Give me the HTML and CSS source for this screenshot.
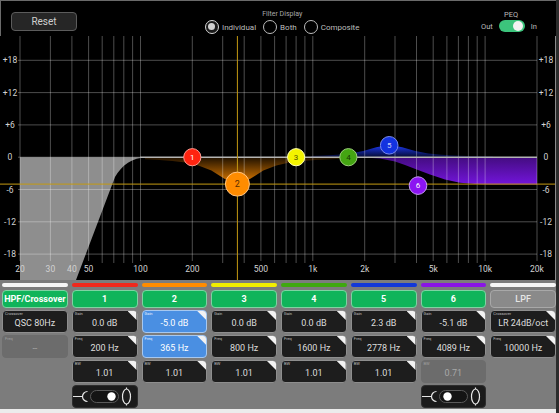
FILE: index.html
```html
<!DOCTYPE html>
<html>
<head>
<meta charset="utf-8">
<link rel="stylesheet" href="styles.css">
</head>
<body>
<div class="app">
  <header class="topbar">
    <div class="reset">Reset</div>
    <div class="filter-display">
      <div class="fd-label">Filter Display</div>
      <div class="radios">
        <span class="radio on"><span class="dot"></span>Individual</span>
        <span class="radio"><span class="dot"></span>Both</span>
        <span class="radio"><span class="dot"></span>Composite</span>
      </div>
    </div>
    <div class="peq">
      <div class="peq-label">PEQ</div>
      <div class="peq-row"><span>Out</span><span class="switch"><span class="knob"></span></span><span>In</span></div>
    </div>
  </header>

  <svg class="plot" width="556" height="244" viewBox="0 36 556 244" xmlns="http://www.w3.org/2000/svg">
    <defs>
      <linearGradient id="gOr" gradientUnits="userSpaceOnUse" x1="0" y1="157" x2="0" y2="184">
        <stop offset="0" stop-color="#ff8c00" stop-opacity="0.12"/>
        <stop offset="1" stop-color="#ff8c00" stop-opacity="0.9"/>
      </linearGradient>
      <linearGradient id="gBl" gradientUnits="userSpaceOnUse" x1="0" y1="157" x2="0" y2="145">
        <stop offset="0" stop-color="#1e3cff" stop-opacity="0.2"/>
        <stop offset="1" stop-color="#1e3cff" stop-opacity="0.95"/>
      </linearGradient>
      <linearGradient id="gPu" gradientUnits="userSpaceOnUse" x1="0" y1="157" x2="0" y2="185">
        <stop offset="0" stop-color="#7a16e8" stop-opacity="0.55"/>
        <stop offset="1" stop-color="#7a16e8" stop-opacity="0.95"/>
      </linearGradient>
    </defs>
    <rect x="0" y="36" width="556" height="244" fill="#000"/>
    <path d="M20,157.2 L147,157.2 C132,157.4 122,165 115,177 L76,280 L20,280 Z" fill="#8e8e8e"/>

    <path d="M145,157.2 L145,159.2 L159.5,159.9 L172.5,160.9 L185.5,162.6 L198.4,165.5 L211.4,170.6 L224.4,178.7 L237.4,184.1 L250.3,178.7 L263.3,170.6 L276.3,165.5 L289.2,162.6 L302.2,160.9 L315.2,159.9 L341.1,158.8 L341.1,157.2 Z" fill="url(#gOr)"/>
    <path d="M311.4,157.2 L311.4,156.0 L324.4,155.5 L337.4,154.7 L350.3,153.4 L363.3,151.0 L376.3,147.3 L389.2,144.8 L402.2,147.3 L415.2,151.0 L428.2,153.4 L441.1,154.7 L454.1,155.5 L467.1,156.0 L493,156.5 L493,157.2 Z" fill="url(#gBl)"/>
    <path d="M360,157.2 L380,158.5 L395,161.5 L405,165 L418,170 L430,174.5 L445,179.5 L460,182.8 L475,184 L490,184.4 L537,184.6 L537,157.2 Z" fill="url(#gPu)"/>

    <g stroke="#ffffff" stroke-opacity="0.3" stroke-width="1">
      <line x1="20" y1="36" x2="20" y2="261"/>
      <line x1="50.4" y1="36" x2="50.4" y2="261"/>
      <line x1="71.9" y1="36" x2="71.9" y2="261"/>
      <line x1="88.6" y1="36" x2="88.6" y2="261"/>
      <line x1="102.2" y1="36" x2="102.2" y2="263"/>
      <line x1="113.8" y1="36" x2="113.8" y2="263"/>
      <line x1="123.8" y1="36" x2="123.8" y2="263"/>
      <line x1="132.6" y1="36" x2="132.6" y2="263"/>
      <line x1="140.5" y1="36" x2="140.5" y2="261"/>
      <line x1="192.3" y1="36" x2="192.3" y2="261"/>
      <line x1="222.7" y1="36" x2="222.7" y2="263"/>
      <line x1="244.2" y1="36" x2="244.2" y2="263"/>
      <line x1="260.9" y1="36" x2="260.9" y2="261"/>
      <line x1="274.6" y1="36" x2="274.6" y2="263"/>
      <line x1="286.1" y1="36" x2="286.1" y2="263"/>
      <line x1="296.1" y1="36" x2="296.1" y2="263"/>
      <line x1="304.9" y1="36" x2="304.9" y2="263"/>
      <line x1="312.8" y1="36" x2="312.8" y2="261"/>
      <line x1="364.7" y1="36" x2="364.7" y2="261"/>
      <line x1="395" y1="36" x2="395" y2="263"/>
      <line x1="416.5" y1="36" x2="416.5" y2="263"/>
      <line x1="433.2" y1="36" x2="433.2" y2="261"/>
      <line x1="446.9" y1="36" x2="446.9" y2="263"/>
      <line x1="458.4" y1="36" x2="458.4" y2="263"/>
      <line x1="468.4" y1="36" x2="468.4" y2="263"/>
      <line x1="477.2" y1="36" x2="477.2" y2="263"/>
      <line x1="485.1" y1="36" x2="485.1" y2="261"/>
      <line x1="537" y1="36" x2="537" y2="261"/>
      <line x1="18" y1="60.3" x2="537" y2="60.3"/>
      <line x1="18" y1="92.6" x2="537" y2="92.6"/>
      <line x1="18" y1="124.9" x2="537" y2="124.9"/>
      <line x1="18" y1="157.2" x2="140" y2="157.2"/>
      <line x1="18" y1="189.5" x2="537" y2="189.5"/>
      <line x1="18" y1="221.8" x2="537" y2="221.8"/>
      <line x1="18" y1="254.1" x2="537" y2="254.1"/>
    </g>
    <line x1="140" y1="157.2" x2="537" y2="157.2" stroke="#b4b4b4" stroke-width="1.4"/>
    <line x1="237.4" y1="36" x2="237.4" y2="280" stroke="#c49a12" stroke-width="1"/>
    <line x1="0" y1="184.1" x2="556" y2="184.1" stroke="#c49a12" stroke-width="1"/>
    <line x1="555.5" y1="36" x2="555.5" y2="280" stroke="#8a8a8a" stroke-width="1"/>

    <g class="axis" text-anchor="middle">
      <text x="10" y="63.3">+18</text>
      <text x="10" y="95.6">+12</text>
      <text x="10" y="127.9">+6</text>
      <text x="10" y="160.2">0</text>
      <text x="10" y="192.5">-6</text>
      <text x="10" y="224.8">-12</text>
      <text x="10" y="257.1">-18</text>
      <text x="546" y="63.3">+18</text>
      <text x="546" y="95.6">+12</text>
      <text x="546" y="127.9">+6</text>
      <text x="546" y="160.2">0</text>
      <text x="546" y="192.5">-6</text>
      <text x="546" y="224.8">-12</text>
      <text x="546" y="257.1">-18</text>
      <text x="20" y="271.5">20</text>
      <text x="50.4" y="271.5">30</text>
      <text x="71.9" y="271.5">40</text>
      <text x="88.6" y="271.5">50</text>
      <text x="140.5" y="271.5">100</text>
      <text x="192.3" y="271.5">200</text>
      <text x="260.9" y="271.5">500</text>
      <text x="312.8" y="271.5">1k</text>
      <text x="364.7" y="271.5">2k</text>
      <text x="433.2" y="271.5">5k</text>
      <text x="485.1" y="271.5">10k</text>
      <text x="537" y="271.5">20k</text>
    </g>

    <g class="markers" text-anchor="middle" stroke-width="1">
      <circle cx="192.3" cy="157.2" r="8.6" fill="#ff2410" stroke="#ff9a90"/>
      <text x="192.3" y="160" fill="#ffffff">1</text>
      <circle cx="296.1" cy="157.2" r="8.6" fill="#f4f400" stroke="#ffffb0"/>
      <text x="296.1" y="160" fill="#555500">3</text>
      <circle cx="348.4" cy="157.2" r="8.6" fill="#44a512" stroke="#9bd07a"/>
      <text x="348.4" y="160" fill="#173a00">4</text>
      <circle cx="389.2" cy="145.3" r="8.8" fill="#1333e0" stroke="#7a8cf0"/>
      <text x="389.2" y="148.1" fill="#c8d0ff">5</text>
      <circle cx="418" cy="185.6" r="8.8" fill="#8c14f2" stroke="#c89af8"/>
      <text x="418" y="188.4" fill="#ffffff">6</text>
      <circle cx="237.4" cy="184.1" r="12" fill="#ff8c00" stroke="#ffc480"/>
      <text x="237.4" y="187.4" fill="#5a2e00" class="big">2</text>
    </g>
  </svg>

  <section class="panel">
    <div class="col">
      <div class="bar c-white"></div>
      <div class="btn green">HPF/Crossover</div>
      <div class="cell"><span class="lbl">Crossover</span><span class="val">QSC 80Hz</span></div>
      <div class="cell off"><span class="lbl">Freq</span><span class="val">--</span></div>
    </div>
    <div class="col">
      <div class="bar c-red"></div>
      <div class="btn green">1</div>
      <div class="cell tri"><span class="lbl">Gain</span><span class="val">0.0 dB</span></div>
      <div class="cell tri"><span class="lbl">Freq</span><span class="val">200 Hz</span></div>
      <div class="cell tri"><span class="lbl">BW</span><span class="val">1.01</span></div>
      <div class="toggle">
        <svg width="64" height="21" viewBox="0 0 64 21">
          <line x1="0" y1="10.5" x2="9" y2="10.5" stroke="#e6e6e6" stroke-width="1.2"/>
          <path d="M14.5,5.5 A5,5 0 0 0 14.5,15.5" fill="none" stroke="#e6e6e6" stroke-width="1.2"/>
          <rect x="17.5" y="4.5" width="28" height="12" rx="6" fill="#141414" stroke="#5a5a5a" stroke-width="1"/>
          <circle cx="38.5" cy="10.5" r="4.2" fill="#ffffff"/>
          <path d="M53.5,1.5 L53.5,3 M53.5,18 L53.5,19.5" stroke="#e6e6e6" stroke-width="1.2"/>
          <ellipse cx="53.5" cy="10.5" rx="4" ry="7.5" fill="none" stroke="#e6e6e6" stroke-width="1.2"/>
        </svg>
      </div>
    </div>
    <div class="col">
      <div class="bar c-orange"></div>
      <div class="btn green">2</div>
      <div class="cell tri sel"><span class="lbl">Gain</span><span class="val">-5.0 dB</span></div>
      <div class="cell tri sel"><span class="lbl">Freq</span><span class="val">365 Hz</span></div>
      <div class="cell tri"><span class="lbl">BW</span><span class="val">1.01</span></div>
    </div>
    <div class="col">
      <div class="bar c-yellow"></div>
      <div class="btn green">3</div>
      <div class="cell tri"><span class="lbl">Gain</span><span class="val">0.0 dB</span></div>
      <div class="cell tri"><span class="lbl">Freq</span><span class="val">800 Hz</span></div>
      <div class="cell tri"><span class="lbl">BW</span><span class="val">1.01</span></div>
    </div>
    <div class="col">
      <div class="bar c-green"></div>
      <div class="btn green">4</div>
      <div class="cell tri"><span class="lbl">Gain</span><span class="val">0.0 dB</span></div>
      <div class="cell tri"><span class="lbl">Freq</span><span class="val">1600 Hz</span></div>
      <div class="cell tri"><span class="lbl">BW</span><span class="val">1.01</span></div>
    </div>
    <div class="col">
      <div class="bar c-blue"></div>
      <div class="btn green">5</div>
      <div class="cell tri"><span class="lbl">Gain</span><span class="val">2.3 dB</span></div>
      <div class="cell tri"><span class="lbl">Freq</span><span class="val">2778 Hz</span></div>
      <div class="cell tri"><span class="lbl">BW</span><span class="val">1.01</span></div>
    </div>
    <div class="col">
      <div class="bar c-purple"></div>
      <div class="btn green">6</div>
      <div class="cell tri"><span class="lbl">Gain</span><span class="val">-5.1 dB</span></div>
      <div class="cell tri"><span class="lbl">Freq</span><span class="val">4089 Hz</span></div>
      <div class="cell off"><span class="lbl">BW</span><span class="val">0.71</span></div>
      <div class="toggle">
        <svg width="64" height="21" viewBox="0 0 64 21">
          <line x1="0" y1="10.5" x2="9" y2="10.5" stroke="#e6e6e6" stroke-width="1.2"/>
          <path d="M14.5,5.5 A5,5 0 0 0 14.5,15.5" fill="none" stroke="#e6e6e6" stroke-width="1.2"/>
          <rect x="17.5" y="4.5" width="28" height="12" rx="6" fill="#141414" stroke="#5a5a5a" stroke-width="1"/>
          <circle cx="25.5" cy="10.5" r="4.2" fill="#ffffff"/>
          <path d="M53.5,1.5 L53.5,3 M53.5,18 L53.5,19.5" stroke="#e6e6e6" stroke-width="1.2"/>
          <ellipse cx="53.5" cy="10.5" rx="4" ry="7.5" fill="none" stroke="#e6e6e6" stroke-width="1.2"/>
        </svg>
      </div>
    </div>
    <div class="col">
      <div class="bar c-white"></div>
      <div class="btn grey">LPF</div>
      <div class="cell tri"><span class="lbl">Crossover</span><span class="val">LR 24dB/oct</span></div>
      <div class="cell tri"><span class="lbl">Freq</span><span class="val">10000 Hz</span></div>
    </div>
  </section>
  <div class="foot"></div>
</div>
</body>
</html>
```

FILE: styles.css
```css
html, body {
  margin: 0;
  padding: 0;
  background: #2c2c2c;
  font-family: Roboto, "Liberation Sans", Arial, sans-serif;
}
.app {
  width: 556px;
  height: 413px;
  display: flex;
  flex-direction: column;
  background: #000;
}
.topbar {
  height: 36px;
  box-sizing: border-box;
  border-top: 1px solid #6a6a6a;
  border-left: 1px solid #6a6a6a;
  display: flex;
  align-items: flex-start;
  color: #c8c8c8;
}
.reset {
  margin: 11px 0 0 10px;
  width: 66px;
  height: 19px;
  box-sizing: border-box;
  background: #262626;
  border: 1px solid #5c5c5c;
  border-radius: 4px;
  font-size: 10px;
  line-height: 17px;
  text-align: center;
  color: #cfcfcf;
}
.filter-display {
  margin: 9px 0 0 128px;
  display: flex;
  flex-direction: column;
  align-items: center;
}
.fd-label {
  font-size: 7px;
  line-height: 9px;
  color: #a8a8a8;
}
.radios {
  display: flex;
  align-items: center;
  margin-top: 1px;
  font-size: 8px;
  color: #bdbdbd;
}
.radio {
  display: flex;
  align-items: center;
  margin-right: 7px;
}
.radio:last-child { margin-right: 0; }
.dot {
  width: 14px;
  height: 14px;
  box-sizing: border-box;
  border: 1px solid #bdbdbd;
  border-radius: 50%;
  margin-right: 3px;
  position: relative;
}
.radio.on .dot {
  border: 1.5px solid #d8d8d8;
  background: #1a1a1a;
}
.radio.on .dot::after {
  content: "";
  position: absolute;
  left: 2px;
  top: 2px;
  width: 7px;
  height: 7px;
  border-radius: 50%;
  background: #d0d0d0;
}
.peq {
  margin: 9px 19px 0 auto;
  display: flex;
  flex-direction: column;
  align-items: center;
}
.peq-label {
  font-size: 7.5px;
  line-height: 9px;
  color: #bcbcbc;
  margin-left: 4px;
}
.peq-row {
  display: flex;
  align-items: center;
  gap: 6px;
  font-size: 7.5px;
  color: #bcbcbc;
  margin-top: 1px;
}
.switch {
  width: 26px;
  height: 12px;
  border-radius: 6px;
  background: #3cc47c;
  position: relative;
}
.knob {
  position: absolute;
  right: 2px;
  top: 1px;
  width: 10px;
  height: 10px;
  border-radius: 50%;
  background: #f2f2f2;
}
.plot {
  display: block;
}
.axis {
  font-family: Roboto, "Liberation Sans", sans-serif;
  font-size: 8.5px;
  fill: #d2d2d2;
}
.markers {
  font-family: Roboto, "Liberation Sans", sans-serif;
  font-size: 8px;
}
.markers .big {
  font-size: 9px;
}
.panel {
  height: 129px;
  box-sizing: border-box;
  background: #7c7c7c;
  padding: 3px 0 0 2px;
  display: grid;
  grid-template-columns: repeat(8, 1fr);
  column-gap: 4px;
  align-items: start;
}
.col {
  display: flex;
  flex-direction: column;
  gap: 2px;
  min-width: 0;
}
.bar {
  height: 4px;
  border-radius: 2px;
  margin-bottom: 1px;
}
.c-white { background: #f6f6f6; }
.c-red { background: #f0281c; }
.c-orange { background: #ff8c00; }
.c-yellow { background: #f2ee00; }
.c-green { background: #3fa80f; }
.c-blue { background: #1238d8; }
.c-purple { background: #8a14e6; }
.btn {
  height: 18px;
  box-sizing: border-box;
  border-radius: 4px;
  font-size: 9px;
  font-weight: 700;
  line-height: 16px;
  text-align: center;
  color: #ffffff;
  white-space: nowrap;
  overflow: hidden;
}
.btn.green {
  background: #10b45a;
  border: 1px solid #7fd2a2;
}
.btn.grey {
  background: #8a8a8a;
  border: 1px solid #a8a8a8;
  color: #e6e6e6;
  font-weight: 500;
}
.cell {
  height: 23px;
  box-sizing: border-box;
  position: relative;
  overflow: hidden;
  border-radius: 4px;
  background: #1d1d1d;
  border: 1px solid #8e8e8e;
  display: flex;
  flex-direction: column;
  color: #dedede;
}
.cell.tri::after {
  content: "";
  position: absolute;
  top: 0;
  right: 0;
  width: 9px;
  height: 9px;
  background: #f2f2f2;
  clip-path: polygon(0 0, 100% 0, 100% 100%);
}
.lbl {
  font-size: 4px;
  line-height: 5px;
  padding-left: 2px;
  color: #bdbdbd;
}
.val {
  font-size: 9px;
  line-height: 15px;
  text-align: center;
  white-space: nowrap;
}
.cell.sel {
  background: #4a8fe2;
  border-color: #a6c8f0;
  color: #ffffff;
}
.cell.sel .lbl { color: #e8f0ff; }
.cell.off {
  background: #6c6c6c;
  border-color: #6c6c6c;
  color: #a8a8a8;
}
.cell.off .lbl { color: #a0a0a0; }
.toggle {
  height: 23px;
  box-sizing: border-box;
  border-radius: 4px;
  background: #1b1b1b;
  border: 1px solid #2e2e2e;
  overflow: hidden;
}
.toggle svg {
  display: block;
}
.foot {
  flex: 1;
  background: #ececec;
}
```
